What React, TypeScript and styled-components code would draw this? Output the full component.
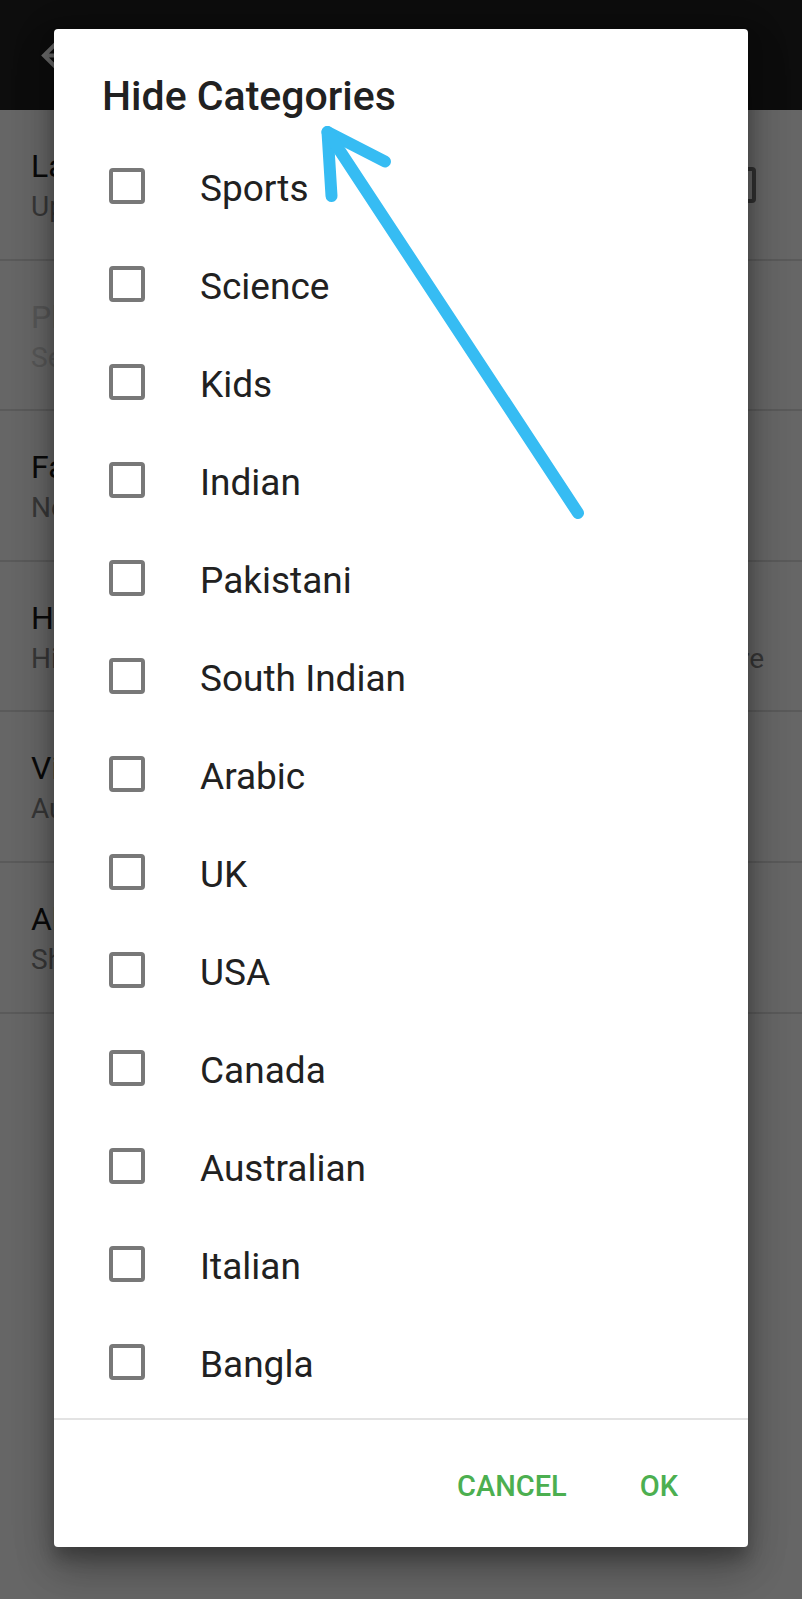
import styled, { createGlobalStyle } from "styled-components";

const GlobalStyle = createGlobalStyle`
  * {
    box-sizing: border-box;
  }
  body {
    margin: 0;
    background: #666666;
    font-family: "Roboto", "Noto Sans", sans-serif;
  }
`;

const Screen = styled.div`
  position: relative;
  width: 802px;
  height: 1599px;
  overflow: hidden;
  background: #ffffff;
`;

const AppBar = styled.div`
  height: 110px;
  background: #222222;
  display: flex;
  align-items: center;
  gap: 50px;
  padding-left: 33px;
  color: #ffffff;
  font-size: 40px;
  font-weight: 500;
`;

const PrefList = styled.div`
  display: flex;
  flex-direction: column;
`;

const PrefRow = styled.div`
  height: 150.6px;
  border-bottom: 2px solid #e2e2e2;
  display: flex;
  align-items: flex-start;
  justify-content: space-between;
  padding: 36px 46px 0 31px;
`;

const PrefText = styled.div`
  display: flex;
  flex-direction: column;
  gap: 3px;
  white-space: nowrap;
`;

const PrefTitle = styled.div<{ $disabled?: boolean }>`
  font-size: 32px;
  line-height: 40px;
  color: ${(p) => (p.$disabled ? "#d6d6d6" : "#1a1a1a")};
`;

// a long summary is spread over the full row width, as on the device
const PrefSummary = styled.div<{ $disabled?: boolean; $full?: boolean }>`
  font-size: 28px;
  line-height: 36px;
  color: ${(p) => (p.$disabled ? "#dadada" : "#8a8a8a")};
  ${(p) =>
    p.$full &&
    `
    width: 733px;
    white-space: normal;
    text-align-last: justify;
  `}
`;

const PrefCheck = styled.div`
  width: 36px;
  height: 36px;
  margin-top: 21px;
  border: 4px solid #7a7a7a;
  border-radius: 4px;
  flex-shrink: 0;
`;

const Scrim = styled.div`
  position: absolute;
  inset: 0;
  background: rgba(0, 0, 0, 0.6);
`;

const Dialog = styled.div`
  position: absolute;
  left: 54px;
  top: 29px;
  width: 694px;
  height: 1518px;
  background: #ffffff;
  border-radius: 4px;
  display: flex;
  flex-direction: column;
  box-shadow: 0 24px 38px rgba(0, 0, 0, 0.22), 0 9px 46px rgba(0, 0, 0, 0.16),
    0 11px 15px rgba(0, 0, 0, 0.2);
`;

const DialogTitle = styled.h2`
  margin: 0;
  padding: 43px 48px 0;
  font-size: 41px;
  line-height: 48px;
  font-weight: 500;
  color: #212121;
`;

const OptionList = styled.div`
  margin-top: 19px;
  display: flex;
  flex-direction: column;
`;

const Option = styled.label`
  height: 98px;
  display: flex;
  align-items: center;
  gap: 55px;
  padding-left: 55px;
  font-size: 37px;
  color: #212121;
`;

const Box = styled.span`
  width: 36px;
  height: 36px;
  margin-top: -4px;
  border: 4px solid #787878;
  border-radius: 4px;
  flex-shrink: 0;
`;

const Divider = styled.div`
  margin-top: 5px;
  height: 2px;
  background: #e3e3e3;
`;

const ButtonBar = styled.div`
  flex: 1;
  display: flex;
  justify-content: flex-end;
  align-items: center;
  gap: 73px;
  padding: 4px 70px 0 0;
`;

const TextButton = styled.button`
  border: none;
  background: none;
  padding: 0;
  font-family: "Roboto", sans-serif;
  font-size: 29px;
  font-weight: 500;
  text-transform: uppercase;
  color: #4caf50;
`;

const Annotation = styled.svg`
  position: absolute;
  left: 0;
  top: 0;
  pointer-events: none;
`;

const BackArrow = () => (
  <svg width="49" height="49" viewBox="0 0 24 24" fill="#ffffff">
    <path d="M20 11H7.83l5.59-5.59L12 4l-8 8 8 8 1.41-1.41L7.83 13H20v-2z" />
  </svg>
);

const prefs = [
  { title: "Last Channel", summary: "Update channel list on startup", check: true },
  { title: "Player", summary: "Select default player", disabled: true },
  { title: "Favourites", summary: "No favourite channels" },
  { title: "Hide Categories", summary: "Hide the categories you do not want to see anywhere", full: true },
  { title: "Video Quality", summary: "Auto" },
  { title: "About", summary: "Show app version" },
];

const categories = [
  "Sports",
  "Science",
  "Kids",
  "Indian",
  "Pakistani",
  "South Indian",
  "Arabic",
  "UK",
  "USA",
  "Canada",
  "Australian",
  "Italian",
  "Bangla",
];

export default function App() {
  return (
    <Screen>
      <GlobalStyle />
      <AppBar>
        <BackArrow />
        <span>Settings</span>
      </AppBar>
      <PrefList>
        {prefs.map((p) => (
          <PrefRow key={p.title}>
            <PrefText>
              <PrefTitle $disabled={p.disabled}>{p.title}</PrefTitle>
              <PrefSummary $disabled={p.disabled} $full={p.full}>
                {p.summary}
              </PrefSummary>
            </PrefText>
            {p.check && <PrefCheck />}
          </PrefRow>
        ))}
      </PrefList>
      <Scrim />
      <Dialog>
        <DialogTitle>Hide Categories</DialogTitle>
        <OptionList>
          {categories.map((c) => (
            <Option key={c}>
              <Box />
              <span>{c}</span>
            </Option>
          ))}
        </OptionList>
        <Divider />
        <ButtonBar>
          <TextButton>Cancel</TextButton>
          <TextButton>OK</TextButton>
        </ButtonBar>
      </Dialog>
      <Annotation width="802" height="1599" viewBox="0 0 802 1599">
        <g
          fill="none"
          stroke="#36bcf3"
          strokeWidth="12"
          strokeLinecap="round"
          strokeLinejoin="round"
        >
          <polyline points="331.5,196 327.5,132 385,161.5" />
          <line x1="327.5" y1="132" x2="578" y2="513" />
        </g>
      </Annotation>
    </Screen>
  );
}
